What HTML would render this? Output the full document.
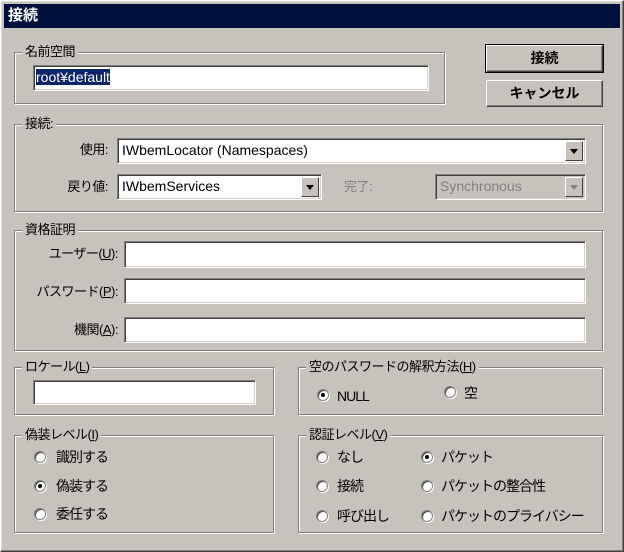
<!DOCTYPE html>
<html><head><meta charset="utf-8">
<style>
*{box-sizing:border-box;margin:0;padding:0}
body{width:624px;height:552px;background:#c7c3bc;font-family:"Liberation Sans","Noto Sans CJK JP",sans-serif;font-size:13px;color:#000;position:relative;overflow:hidden}
.win{position:absolute;left:0;top:0;width:624px;height:552px;border:1px solid #fff;border-right-color:#404040;border-bottom-color:#404040;box-shadow:inset -1px -1px 0 #808080, inset 1px 1px 0 #e0ddd8}
.title{position:absolute;left:4px;top:4px;width:616px;height:24px;background:#00103c;color:#fff;font-weight:bold;font-size:15px;line-height:24px;padding-left:4px}
.grp{position:absolute;border:1px solid #808080;box-shadow:1px 1px 0 #fff, inset 1px 1px 0 #fff}
.lg{position:absolute;background:#c7c3bc;padding:0 3px;line-height:16px;white-space:nowrap;letter-spacing:-0.5px}
.tb{position:absolute;background:#fff;border:1px solid #808080;border-right-color:#fff;border-bottom-color:#fff;box-shadow:inset 1px 1px 0 #404040, inset -1px -1px 0 #d4d0c8;line-height:22px;padding-left:4px;white-space:nowrap;font-size:14px}
.dd{position:absolute;right:2px;top:2px;width:18px;bottom:2px;background:#c7c3bc;border:1px solid #fff;border-right-color:#404040;border-bottom-color:#404040}
.dd:after{content:"";position:absolute;left:4px;top:7px;border-left:4px solid transparent;border-right:4px solid transparent;border-top:5px solid #000}
.dis .dd:after{border-top-color:#808080}
.btn{position:absolute;border:1px solid #fff;border-right-color:#404040;border-bottom-color:#404040;box-shadow:inset -1px -1px 0 #808080;text-align:center;line-height:24px;font-size:14px;font-weight:bold}
.def{outline:1px solid #000}
.lab{position:absolute;white-space:nowrap;line-height:16px;text-align:right;letter-spacing:-0.5px}
.r{position:absolute;width:12px;height:12px;border-radius:50%;background:#fff;border:1px solid #808080;box-shadow:inset 1px 1px 0 #404040, 1px 1px 0 #fff}
.r.on:after{content:"";position:absolute;left:3px;top:3px;width:4px;height:4px;border-radius:50%;background:#000}
.rt{position:absolute;white-space:nowrap;line-height:16px;font-size:14px;letter-spacing:-1px}
u{text-decoration:underline}
</style></head><body>
<div class="win"></div>
<div class="title">接続</div>

<div class="grp" style="left:14px;top:52px;width:431px;height:52px"></div>
<div class="lg" style="left:22px;top:44px">名前空間</div>
<div class="tb" style="left:33px;top:65px;width:396px;height:26px;padding-left:2px"><span style="background:#0a246a;color:#fff;line-height:14px">root¥default</span></div>

<div class="btn def" style="left:486px;top:45px;width:117px;height:27px">接続</div>
<div class="btn" style="left:486px;top:80px;width:117px;height:27px">キャンセル</div>

<div class="grp" style="left:14px;top:124px;width:589px;height:88px"></div>
<div class="lg" style="left:22px;top:116px">接続:</div>
<div class="lab" style="left:60px;top:142px;width:48px">使用:</div>
<div class="tb" style="left:117px;top:138px;width:469px;height:26px">IWbemLocator (Namespaces)<div class="dd"></div></div>
<div class="lab" style="left:50px;top:179px;width:58px">戻り値:</div>
<div class="tb" style="left:117px;top:174px;width:205px;height:26px">IWbemServices<div class="dd"></div></div>
<div class="lab" style="left:344px;top:179px;color:#808080">完了:</div>
<div class="tb dis" style="left:435px;top:174px;width:151px;height:26px;background:#c7c3bc;color:#808080">Synchronous<div class="dd"></div></div>

<div class="grp" style="left:14px;top:230px;width:589px;height:121px"></div>
<div class="lg" style="left:22px;top:222px">資格証明</div>
<div class="lab" style="left:20px;top:246px;width:98px">ユーザー(<u>U</u>):</div>
<div class="tb" style="left:124px;top:241px;width:462px;height:27px"></div>
<div class="lab" style="left:20px;top:284px;width:98px">パスワード(<u>P</u>):</div>
<div class="tb" style="left:124px;top:278px;width:462px;height:26px"></div>
<div class="lab" style="left:20px;top:322px;width:98px">機関(<u>A</u>):</div>
<div class="tb" style="left:124px;top:317px;width:462px;height:26px"></div>

<div class="grp" style="left:14px;top:367px;width:260px;height:48px"></div>
<div class="lg" style="left:22px;top:359px">ロケール(<u>L</u>)</div>
<div class="tb" style="left:33px;top:380px;width:223px;height:25px"></div>

<div class="grp" style="left:298px;top:367px;width:305px;height:48px"></div>
<div class="lg" style="left:306px;top:359px">空のパスワードの解釈方法(<u>H</u>)</div>
<div class="r on" style="left:317px;top:389px"></div><div class="rt" style="left:337px;top:388px">NULL</div>
<div class="r" style="left:444px;top:386px"></div><div class="rt" style="left:464px;top:385px">空</div>

<div class="grp" style="left:14px;top:435px;width:260px;height:98px"></div>
<div class="lg" style="left:22px;top:427px">偽装レベル(<u>I</u>)</div>
<div class="r" style="left:34px;top:451px"></div><div class="rt" style="left:56px;top:449px">識別する</div>
<div class="r on" style="left:34px;top:480px"></div><div class="rt" style="left:56px;top:478px">偽装する</div>
<div class="r" style="left:34px;top:508px"></div><div class="rt" style="left:56px;top:506px">委任する</div>

<div class="grp" style="left:298px;top:435px;width:305px;height:98px"></div>
<div class="lg" style="left:306px;top:427px">認証レベル(<u>V</u>)</div>
<div class="r" style="left:316px;top:451px"></div><div class="rt" style="left:337px;top:449px">なし</div>
<div class="r on" style="left:421px;top:451px"></div><div class="rt" style="left:441px;top:449px">パケット</div>
<div class="r" style="left:316px;top:480px"></div><div class="rt" style="left:337px;top:478px">接続</div>
<div class="r" style="left:421px;top:480px"></div><div class="rt" style="left:441px;top:478px">パケットの整合性</div>
<div class="r" style="left:316px;top:510px"></div><div class="rt" style="left:337px;top:508px">呼び出し</div>
<div class="r" style="left:421px;top:510px"></div><div class="rt" style="left:441px;top:508px">パケットのプライバシー</div>
</body></html>
